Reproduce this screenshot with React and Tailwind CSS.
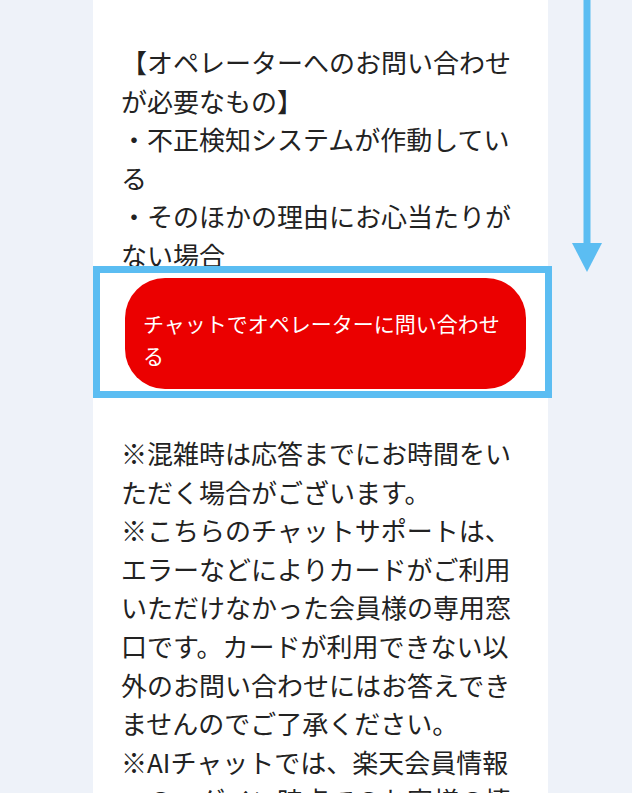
const topLines = [
  "【オペレーターへのお問い合わせが必要なもの】",
  "・不正検知システムが作動している",
  "・そのほかの理由にお心当たりがない場合",
];

const bottomLines = [
  "※混雑時は応答までにお時間をいただく場合がございます。",
  "※こちらのチャットサポートは、エラーなどによりカードがご利用いただけなかった会員様の専用窓口です。カードが利用できない以外のお問い合わせにはお答えできませんのでご了承ください。",
  "※AIチャットでは、楽天会員情報へのログイン時点でのお客様の情報を参照します。",
];

const DownArrow = () => (
  <svg width="84" height="280" viewBox="0 0 84 280" className="block">
    <rect x="35.5" y="0" width="7" height="246" fill="#5bbdf2" />
    <polygon points="24,243 54,243 39,272" fill="#5bbdf2" />
  </svg>
);

const App = () => {
  return (
    <div
      className="w-[632px] h-[793px] overflow-hidden bg-[#eef2f9] flex"
      style={{ fontFamily: '"Noto Sans CJK JP", "Noto Sans", sans-serif' }}
    >
      <div className="ml-[93px] w-[455px] shrink-0 bg-white pl-[28px] pr-[35px] pt-[43px] text-[#222]">
        <div className="text-[26px] leading-[38.5px]">
          {topLines.map((line) => (
            <p key={line}>{line}</p>
          ))}
        </div>

        <div className="relative mt-[4px] ml-[4px] w-[401px]">
          <button className="w-full rounded-[40px] bg-[#eb0000] pl-[18px] pr-[18px] pt-[29px] pb-[18px] text-left text-[21px] leading-[32px] text-white">
            チャットでオペレーターに問い合わせる
          </button>
          {/* annotation frame */}
          <div className="pointer-events-none absolute -left-[32px] -right-[26px] -top-[12px] -bottom-[9px] border-[7px] border-[#5bbdf2]"></div>
        </div>

        <div className="mt-[45px] text-[26px] leading-[38.6px]">
          {bottomLines.map((line) => (
            <p key={line}>{line}</p>
          ))}
        </div>
      </div>
      <div className="flex-1">
        <DownArrow />
      </div>
    </div>
  );
};

export default App;
